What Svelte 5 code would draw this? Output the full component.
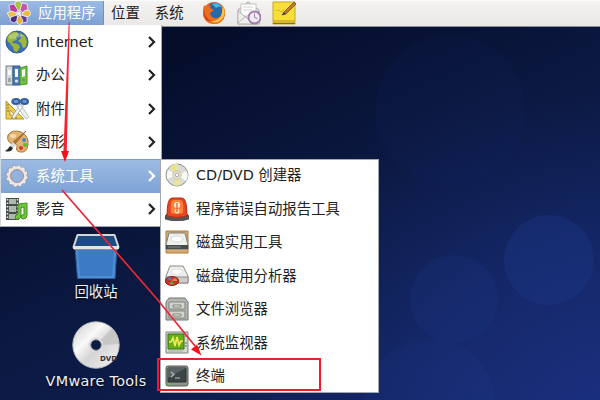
<script lang="ts">
    type Item = { icon: string; label: string };

    const categories: Item[] = [
        { icon: 'globe', label: 'Internet' },
        { icon: 'office', label: '办公' },
        { icon: 'accessories', label: '附件' },
        { icon: 'graphics', label: '图形' },
        { icon: 'system', label: '系统工具' },
        { icon: 'media', label: '影音' },
    ];
    const tools: Item[] = [
        { icon: 'disc', label: 'CD/DVD 创建器' },
        { icon: 'alarm', label: '程序错误自动报告工具' },
        { icon: 'disk', label: '磁盘实用工具' },
        { icon: 'usage', label: '磁盘使用分析器' },
        { icon: 'files', label: '文件浏览器' },
        { icon: 'monitor', label: '系统监视器' },
        { icon: 'terminal', label: '终端' },
    ];
    const launchers: string[] = ['firefox', 'mail', 'note'];

    let openCategory = $state('system');
</script>

{#snippet icon(name: string)}
    <svg class="icon" viewBox="0 0 24 24">
        {#if name === 'centos'}
            <g stroke="#f6eef6" stroke-width=".8" stroke-linejoin="round">
                <path d="M8 1l4-1 3 3-1 6-3 1-3-4z" fill="#a5c43f" />
                <path d="M15 2l5 1 1 5-5 4-3-3z" fill="#c558ae" />
                <path d="M2 4l5-1 4 6-2 3-6-2z" fill="#b43f9c" />
                <path d="M17 10l5-1 2 4-3 3-6-2z" fill="#e9bd3a" />
                <path d="M0 12l4-2 6 2-1 4-6 1z" fill="#edc044" />
                <path d="M14 14l6 2v5l-5 1-3-5z" fill="#5a3d94" />
                <path d="M4 16l6-2 1 5-4 3-4-2z" fill="#4b2f86" />
                <path d="M10 17l3-3 3 6-3 4-3-2z" fill="#e5b331" />
            </g>
            <circle cx="12" cy="12.500" r="2" fill="#f4e6f2" />
        {:else if name === 'globe'}
            <circle cx="12" cy="12" r="11" fill="#3e70b4" stroke="#315b91" />
            <path d="M3 6q4-5 9-4l2 3-3 2 1 3-4 1-1 3-4-2-1-3zM8 13l5 1 2 3-3 5-3-1-1-4-3-3zM15 3l5 3 2 5-1 6-3 1-2-5-3-2 3-3z" fill="#9bb83d" />
            <path d="M4 6q7-6 15 0-7 3-15 3z" fill="#fff" opacity=".25" />
        {:else if name === 'office'}
            <path d="M1 3h7v19H1z" fill="#d4dcda" stroke="#778" />
            <path d="M8 3h7v19H8z" fill="#4b7db6" stroke="#315a88" />
            <path d="M15 5l7-2v18l-7 1z" fill="#71c43b" stroke="#4c932d" />
            <path d="M3 7h3v5H3zM10 6h3v8h-3zM17 7l3-1v7l-3 1z" fill="#f6faf8" />
            <path d="M3 16h3M3 18h3M17 17h3" stroke="#67737a" />
            <circle cx="11.5" cy="18" r="1.6" fill="#dce8f4" />
        {:else if name === 'accessories'}
            <path d="M1 4v18h18z" fill="#ebca4c" stroke="#b5962d" />
            <path d="M5 13v5h5z" fill="#fff" stroke="#b5962d" />
            <path d="M2 8h2M2 11h2M2 14h2M7 20v2M11 20v2" stroke="#88712b" />
            <path d="M11 8l10 14 3-2-9-13M19 8L9 22l-2-2 8-13" fill="#eef2f1" stroke="#8d9799" stroke-width=".6" />
            <ellipse cx="11" cy="4.500" rx="3.6" ry="2.5" fill="#6d97d2" stroke="#315f9f" stroke-width="2.2" />
            <ellipse cx="19.5" cy="4.500" rx="3.4" ry="2.500" fill="#6d97d2" stroke="#315f9f" stroke-width="2.2" />
        {:else if name === 'graphics'}
            <path d="M3 5Q7-1 16 2q8 4 7 13-1 8-8 7-5-1-3-5 1-3-3-3Q1 13 3 5z" fill="#dfb574" stroke="#a97532" />
            <ellipse cx="8" cy="6" rx="3" ry="2" fill="#f4d7a3" />
            <circle cx="19" cy="10" r="2" fill="#5382bd" />
            <circle cx="20" cy="15" r="2" fill="#66b52f" />
            <circle cx="16" cy="18" r="2" fill="#d5372d" />
            <path d="M21 1L10 14l-2-2z" fill="#bd7634" stroke="#80501f" stroke-width=".6" />
            <path d="M8 12l3 3-3 3-3-2z" fill="#d8dcd9" />
            <path d="M5 16l3 2q-2 5-8 3 3-1 5-5z" fill="#25292a" />
        {:else if name === 'system'}
            <circle cx="12" cy="12" r="9.6" fill="none" stroke="#8b8585" stroke-width="3.4" stroke-dasharray="3.2 1.83" />
            <circle cx="12" cy="12" r="9.2" fill="none" stroke="#efeceb" stroke-width="3" stroke-dasharray="2.6 2.22" stroke-dashoffset="-.3" />
            <circle cx="12" cy="12" r="8" fill="none" stroke="#eae7e6" stroke-width="3" />
            <circle cx="12" cy="12" r="6.5" fill="#93b2de" stroke="#b9837f" stroke-width=".9" />
        {:else if name === 'media'}
            <path d="M1 1h13v22H1z" fill="#444c48" />
            <path d="M4 2h7v5H4zM4 9h7v6H4zM4 17h7v5H4z" fill="#aeb9b0" />
            <path d="M2.5 2v20M12.5 2v20" stroke="#edf0ec" stroke-width="1.5" stroke-dasharray="1.5 2" />
            <path d="M13 7l9-1v12q0 4-4 4-3-1-2-3 1-2 3-1v-8l-3 .5V19q-1 4-5 3-2-2 0-4l2-.5z" fill="#73c83a" stroke="#438c24" />
        {:else if name === 'disc'}
            <circle cx="12" cy="12" r="11" fill="#dadbd7" stroke="#8c8f8a" />
            <path d="M12 12L5 4q4-4 8-3zM12 12l5 9q-4 3-9 1z" fill="#e9e3a4" />
            <path d="M12 12l10-4q2 7-1 10zM12 12L2 16q-1-5 1-9z" fill="#f8f8f6" />
            <circle cx="8.500" cy="5" r="2" fill="#efe36a" />
            <circle cx="12" cy="12" r="4.2" fill="#e3e3df" stroke="#c5bf6a" stroke-width=".8" />
            <circle cx="12" cy="12" r="1.8" fill="#fff" stroke="#999" stroke-width=".8" />
        {:else if name === 'alarm'}
            <path d="M0 19l3-3h18l3 3v3q-12 4-24 0z" fill="#555" stroke="#333" stroke-width=".6" />
            <path d="M2 19Q2 1 7 1h10q5 0 5 18-10 3-20 0z" fill="#e94521" stroke="#b12f18" />
            <path d="M6 16Q5 4 8 3h8q3 1 2 13-6 2-12 0z" fill="#ff8038" />
            <circle cx="12" cy="8" r="3" fill="#fff0d1" />
            <circle cx="12" cy="14" r="2.5" fill="#ffe0b0" />
            <path d="M12 6v9" stroke="#e34a22" stroke-width="1.2" />
        {:else if name === 'disk'}
            <path d="M1 1h22v22H1z" fill="#d7aa70" stroke="#aa7b43" />
            <path d="M4 3h16l3 12v4H1v-4z" fill="#f0f1ef" stroke="#7c7f7b" />
            <path d="M1 15h22v4H1z" fill="#454c4c" />
            <ellipse cx="12" cy="9" rx="6" ry="3" fill="#fff" stroke="#d5d8d5" />
            <path d="M3 17h13" stroke="#818b87" />
        {:else if name === 'usage'}
            <path d="M5 2h13l5 10v7H1v-7z" fill="#eeeeeb" stroke="#888a86" />
            <path d="M1 13h22v6H1z" fill="#cdcecb" stroke="#888a86" />
            <ellipse cx="12" cy="8" rx="6" ry="3" fill="#fafaf8" stroke="#dddedb" />
            <ellipse cx="7" cy="17" rx="6.8" ry="4.5" fill="#c93127" stroke="#8b2420" />
            <path d="M7 17l-5-2q2-3 5-1z" fill="#4d7cb4" />
            <path d="M7 17l2-3q4 1 3 3z" fill="#d98b3f" />
            <path d="M7 17l-3 3q3 1 5 0z" fill="#73a642" />
        {:else if name === 'files'}
            <path d="M4 1h16l3 4v18H1V5z" fill="#b4b7b1" stroke="#747770" />
            <path d="M4 5h16v7H4zM4 14h16v7H4z" fill="#d2d4ce" stroke="#81847e" />
            <path d="M8 8h8v2H8zM8 17h8v2H8z" fill="#f0f0ed" stroke="#666963" stroke-width=".8" />
        {:else if name === 'monitor'}
            <path d="M1 1h22v21H1z" fill="#d7d8d4" stroke="#7d827b" />
            <path d="M3 3h16v15H3z" fill="#62af18" stroke="#387019" />
            <path d="M4 11h2l2-4 2 8 2-9 2 8 2-4h2" fill="none" stroke="#f1e955" stroke-width="1.7" />
            <path d="M20 5h2M20 12h2M20 15h2" stroke="#60665c" />
            <path d="M3 20h15" stroke="#a7aaa4" />
        {:else if name === 'terminal'}
            <rect x="1" y="2" width="22" height="20" rx="2" fill="#8f938e" stroke="#5a5f5a" />
            <path d="M3 4h18v14H3z" fill="#3c4546" stroke="#2d3333" />
            <path d="M3 4h18L3 14z" fill="#596263" />
            <path d="M6 8l3 2.5L6 13M10 14h5" fill="none" stroke="#b8c2bb" stroke-width="1.2" />
            <path d="M3 20h3" stroke="#73c936" />
        {:else if name === 'firefox'}
            <circle cx="12" cy="12" r="11" fill="#e66a1d" />
            <circle cx="13" cy="9.5" r="8" fill="#2869aa" />
            <path d="M10 3q6-3 10 3-4-1-6 1z" fill="#56aeda" />
            <path d="M2 4l3 2 4-2-1 3 4 2-4 3q1 6 7 5 5-1 5-7 1-4-1-7 5 5 4 11-2 9-11 9Q1 22 1 12q0-5 1-8z" fill="#ed6b1b" />
            <path d="M20 4q6 10-2 16-5 3-11 0 9 1 12-5 2-5 1-11z" fill="#f6c543" />
            <path d="M2 8q0 10 9 13Q0 20 2 8z" fill="#c93a19" />
        {:else if name === 'mail'}
            <path d="M1 9l10-8 11 8v14H1z" fill="#e2e3e1" stroke="#a4a6a3" />
            <path d="M4 3h15v12H4z" fill="#fff" stroke="#c5c5c3" />
            <path d="M6 6h10M6 9h10" stroke="#d0d1cf" />
            <path d="M1 10l10 8 11-8v13H1z" fill="#eeeeec" stroke="#b5b6b4" />
            <path d="M1 22l8-7" stroke="#b5b6b4" />
            <circle cx="17.5" cy="16.5" r="6" fill="#efebf0" stroke="#9f7dad" stroke-width="1.8" />
            <path d="M17.5 12.5v4l3 1" fill="none" stroke="#9986a1" />
        {:else if name === 'note'}
            <path d="M1 1h22v22H1z" fill="#f7df37" stroke="#c5a722" />
            <path d="M1 19h22v3H1z" fill="#d7b82c" />
            <path d="M1 22.5h22" stroke="#806d30" />
            <path d="M4 10l3-1 2 2 3-2" fill="none" stroke="#cdb336" />
            <path d="M22 1l2 2-10 10-4 1 2-3z" fill="#bd7b2b" stroke="#75512c" stroke-width=".8" />
            <path d="M10 14l2-3 2 2z" fill="#444" />
        {/if}
    </svg>
{/snippet}

{#snippet chevron()}
    <svg class="chevron" viewBox="0 0 8 12">
        <path d="M1 1l5 5-5 5" fill="none" stroke="currentColor" stroke-width="2.2" />
    </svg>
{/snippet}

<div class="screen" lang="zh-CN">
    <svg class="wallpaper" viewBox="0 0 600 400">
        <circle cx="549" cy="260" r="45" fill="#1c3a8c" opacity=".34" />
        <circle cx="454" cy="299" r="44" fill="#1c3a8c" opacity=".2" />
        <circle cx="430" cy="405" r="66" fill="#1d3d92" opacity=".16" />
        <circle cx="450" cy="110" r="75" fill="#17357c" opacity=".08" />
    </svg>

    <header class="panel">
        <button class="panel-menu active">{@render icon('centos')}<span>应用程序</span></button>
        <button class="panel-menu places">位置</button>
        <button class="panel-menu">系统</button>
        <div class="launchers">
            {#each launchers as name}
                {@render icon(name)}
            {/each}
        </div>
    </header>

    <div class="desktop-item trash">
        <svg width="50" height="48" viewBox="0 0 50 48">
            <path d="M4 14h42l-2 32.500H6.500z" fill="#4c8cd2" stroke="#2b5d9d" />
            <path d="M7 17h36l-2 27H9z" fill="#3c7bc4" />
            <path d="M6.500 3h37l4 12h-45z" fill="#1d4b86" stroke="#d4d8d5" stroke-width="2" stroke-linejoin="round" />
            <path d="M2 15.500h46" stroke="#e4e6e1" stroke-width="3" />
            <path d="M3 17.500h44" stroke="#8d918c" />
        </svg>
        <span>回收站</span>
    </div>
    <div class="desktop-item dvd">
        <svg width="50" height="48" viewBox="0 0 50 48">
            <defs>
                <linearGradient id="silver" x1="0" y1="0" x2="1" y2="1">
                    <stop offset="0" stop-color="#c8c8c8" />
                    <stop offset=".35" stop-color="#fafafa" />
                    <stop offset=".55" stop-color="#d5d5d5" />
                    <stop offset="1" stop-color="#f4f4f4" />
                </linearGradient>
            </defs>
            <circle cx="25" cy="24" r="23.2" fill="url(#silver)" stroke="#b9bab9" />
            <path d="M25 24L41 7q7 7 7 16z" fill="#b5b5b5" opacity=".5" />
            <circle cx="25" cy="24" r="7" fill="#e9e9e9" stroke="#d4d4d4" />
            <circle cx="25" cy="24" r="5.2" fill="#0d1a42" stroke="#727780" />
            <text x="29" y="40">DVD</text>
        </svg>
        <span>VMware Tools</span>
    </div>

    <nav class="menu categories">
        {#each categories as item}
            <button class="row" class:selected={item.icon === openCategory} onclick={() => (openCategory = item.icon)}>
                {@render icon(item.icon)}
                <span>{item.label}</span>
                {@render chevron()}
            </button>
        {/each}
    </nav>

    {#if openCategory === 'system'}
        <nav class="menu tools">
            {#each tools as item}
                <button class="row">
                    {@render icon(item.icon)}
                    <span>{item.label}</span>
                </button>
            {/each}
        </nav>
    {/if}

    <!-- red guide arrows -->
    <svg class="guide" viewBox="0 0 600 400">
        <path d="M68.7 22h1L66.7 154h-3.4z" fill="#f5222f" />
        <path d="M61 151l4 11 4-11z" fill="#f5121f" />
        <path d="M62 190L157 299 195 346" fill="none" stroke="#e92735" stroke-width="1.7" />
        <path d="M201.5 355.5l-10.5-6 6-5z" fill="#f5121f" />
        <rect x="158" y="359" width="162" height="31" fill="none" stroke="#f31a2a" stroke-width="2" />
    </svg>
</div>

<style>
    :global(body) {
        margin: 0;
        overflow: hidden;
    }
    .screen {
        position: relative;
        width: 600px;
        height: 400px;
        overflow: hidden;
        background:
            radial-gradient(ellipse 420px 330px at 620px 420px, #1b3080 0%, rgba(27, 48, 128, 0) 100%),
            linear-gradient(155deg, #050d2b 20%, #0b1840 50%, #10235c 100%);
        font: 14.4px/20px "DejaVu Sans", "Noto Sans CJK SC", sans-serif;
        color: #222;
    }
    button {
        font: inherit;
        color: inherit;
        border: none;
        margin: 0;
        padding: 0;
        background: none;
        text-align: left;
        white-space: nowrap;
    }
    .icon {
        width: 24px;
        height: 24px;
        flex: none;
    }
    .wallpaper, .guide {
        position: absolute;
        inset: 0;
        width: 600px;
        height: 400px;
        pointer-events: none;
    }
    .panel {
        position: relative;
        display: flex;
        height: 27px;
        box-sizing: border-box;
        background: linear-gradient(#f4f3f1, #e9e8e6);
        border-top: 1px solid #fafafa;
        border-bottom: 1px solid #8d9096;
    }
    .panel-menu {
        display: flex;
        align-items: center;
        padding: 0 8px 2px 7px;
    }
    .panel-menu.active {
        width: 104px;
        box-sizing: border-box;
        gap: 7px;
        color: #fff;
        background: linear-gradient(#9bbbe3, #7a9fd2);
        border-right: 1px solid #7090bf;
    }
    .launchers {
        display: flex;
        align-items: center;
        gap: 11px;
        margin-left: 10px;
        padding-bottom: 2px;
    }
    .menu {
        position: absolute;
        box-sizing: border-box;
        background: #fff;
        border: 1px solid #a3a8b2;
    }
    .categories {
        left: 0;
        top: 25px;
        width: 162px;
        height: 202px;
        border-left-color: #d5dae2;
        border-top: none;
    }
    .tools {
        left: 160px;
        top: 159px;
        width: 219px;
        height: 234px;
    }
    .row {
        display: flex;
        align-items: center;
        width: 100%;
        height: 33.5px;
        padding: 0 5px 0 4px;
        gap: 7px;
    }
    .tools .row {
        padding: 0 5px 3px 4px;
    }
    .selected {
        color: #fff;
        background: linear-gradient(#9dbce3, #7da3d6);
        box-shadow: inset 0 1px #7c9cc9;
    }
    .chevron {
        width: 8px;
        height: 12px;
        margin-left: auto;
    }
    .desktop-item {
        position: absolute;
        left: 36px;
        width: 120px;
        display: flex;
        flex-direction: column;
        align-items: center;
        color: #eef0f5;
        text-shadow: 0 1px 2px #000;
    }
    .trash {
        top: 232px;
    }
    .trash span {
        margin-top: 2px;
    }
    .dvd {
        top: 321px;
    }
    .dvd span {
        margin-top: 2px;
        letter-spacing: .3px;
    }
    .dvd text {
        font: bold 7px "DejaVu Sans", sans-serif;
        fill: #333;
        text-shadow: none;
    }
</style>
